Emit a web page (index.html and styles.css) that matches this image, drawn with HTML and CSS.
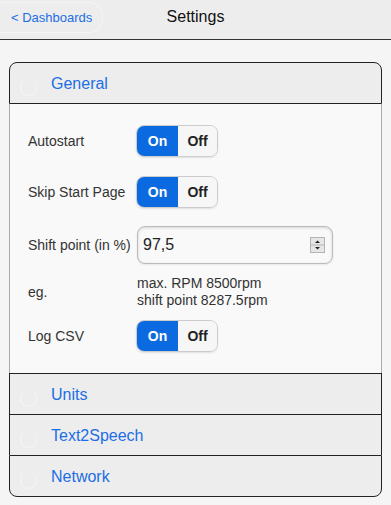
FILE: index.html
```html
<!DOCTYPE html>
<html lang="en">
<head>
  <meta charset="UTF-8" />
  <meta name="viewport" content="width=device-width, initial-scale=1" />
  <title>Settings</title>
  <link rel="stylesheet" href="styles.css">
</head>
<body>

  <header class="bar">
    <a class="back" href="#">&lt; Dashboards</a>
    <h1>Settings</h1>
    <span></span>
  </header>

  <main class="page">
    <div class="set">

      <div class="block open">
        <h3 class="head"><span class="disc"></span>General</h3>
        <div class="content">
          <div class="row">
            <label>Autostart</label>
            <div class="switch"><span class="on">On</span><span class="off">Off</span></div>
          </div>
          <div class="row">
            <label>Skip Start Page</label>
            <div class="switch"><span class="on">On</span><span class="off">Off</span></div>
          </div>
          <div class="row gap-small">
            <label>Shift point (in %)</label>
            <div class="field">
              <input type="text" value="97,5" />
              <svg class="spin" width="15" height="16" viewBox="0 0 15 16">
                <rect x="0.5" y="0.5" width="14" height="15" fill="#e6e6e6" stroke="#b5b5b5" />
                <line x1="1" y1="8" x2="14" y2="8" stroke="#b5b5b5" />
                <path d="M5 6 L7.5 3.5 L10 6 Z" fill="#222" />
                <path d="M5 10 L7.5 12.5 L10 10 Z" fill="#222" />
              </svg>
            </div>
          </div>
          <div class="row note">
            <label>eg.</label>
            <div class="hint">max. RPM 8500rpm<br>shift point 8287.5rpm</div>
          </div>
          <div class="row note">
            <label>Log CSV</label>
            <div class="switch"><span class="on">On</span><span class="off">Off</span></div>
          </div>
        </div>
      </div>

      <div class="block">
        <h3 class="head"><span class="disc"></span>Units</h3>
      </div>
      <div class="block">
        <h3 class="head"><span class="disc"></span>Text2Speech</h3>
      </div>
      <div class="block last">
        <h3 class="head"><span class="disc"></span>Network</h3>
      </div>

    </div>
  </main>

</body>
</html>
```

FILE: styles.css
```css
body {
  margin: 0;
  font-family: 'Liberation Sans', Arial, sans-serif;
  background: #f5f5f5;
  color: #333;
}

.bar {
  display: grid;
  grid-template-columns: 1fr auto 1fr;
  align-items: start;
  height: 39px;
  background: #ededed;
  border-bottom: 1px solid #333;
}

.back {
  justify-self: start;
  margin-top: 2px;
  padding: 6px 11px 0 11px;
  height: 23px;
  width: 80px;
  white-space: nowrap;
  border: 1px solid #f4f4f4;
  border-left: none;
  border-radius: 0 14px 14px 0;
  color: #1c6ee6;
  font-size: 13px;
  text-decoration: none;
  line-height: 17px;
}

.bar h1 {
  margin: 0;
  padding-top: 7px;
  font-size: 16px;
  font-weight: normal;
  line-height: 19px;
  color: #111;
}

.page {
  padding: 22px 9px 8px 9px;
}

.head {
  box-sizing: border-box;
  margin: 0;
  display: flex;
  align-items: center;
  height: 41px;
  padding: 2px 0 0 10px;
  background: #ededed;
  border: 1px solid #222;
  border-bottom: none;
  color: #1c6ee6;
  font-size: 16px;
  font-weight: normal;
}

.disc {
  width: 17px;
  height: 17px;
  margin-right: 14px;
  margin-top: 6px;
  border-radius: 50%;
  border: 1px solid rgba(255, 255, 255, 0.45);
  border-top-color: transparent;
  box-sizing: border-box;
}

.open .head {
  height: 42px;
  border-radius: 8px 8px 0 0;
  border-bottom: 1px solid #222;
}

.last .head {
  height: 42px;
  border-bottom: 1px solid #222;
  border-radius: 0 0 8px 8px;
}

.content {
  background: #f9f9f9;
  border-left: 1px solid #aaa;
  border-right: 1px solid #aaa;
  padding: 21px 18px 21px 18px;
}

.row {
  display: grid;
  grid-template-columns: 108px auto;
  align-items: center;
  justify-content: start;
}

.row + .row {
  margin-top: 19px;
}

.row.gap-small {
  margin-top: 18px;
}

.row.note {
  margin-top: 11px;
}

label {
  font-size: 14px;
  color: #333;
}

.switch {
  display: flex;
  width: 80px;
  height: 30px;
  border: 1px solid #ccc;
  border-radius: 8px;
  overflow: hidden;
  box-shadow: 0 1px 2px rgba(0, 0, 0, 0.1);
  font-size: 14px;
  font-weight: bold;
}

.switch span {
  display: flex;
  align-items: center;
  justify-content: center;
}

.switch .on {
  width: 41px;
  background: #0b6ae0;
  color: #fff;
}

.switch .off {
  flex: 1;
  background: #f6f6f6;
  color: #222;
}

.field {
  display: flex;
  align-items: center;
  width: 183px;
  height: 36px;
  margin-left: 1px;
  padding: 0 6px 0 5px;
  border: 1px solid #bbb;
  border-radius: 8px;
  background: #f9f9f9;
  box-shadow: inset 0 1px 3px rgba(0, 0, 0, 0.15), 0 1px 2px rgba(0, 0, 0, 0.08);
}

.field input {
  flex: 1;
  min-width: 0;
  border: none;
  background: transparent;
  font-family: 'Liberation Sans', Arial, sans-serif;
  font-size: 16px;
  color: #222;
  padding: 0;
  outline: none;
}

.spin {
  flex: none;
  margin-right: 1px;
}

.hint {
  font-size: 14px;
  line-height: 17px;
  color: #333;
  margin-left: 1px;
}
```
